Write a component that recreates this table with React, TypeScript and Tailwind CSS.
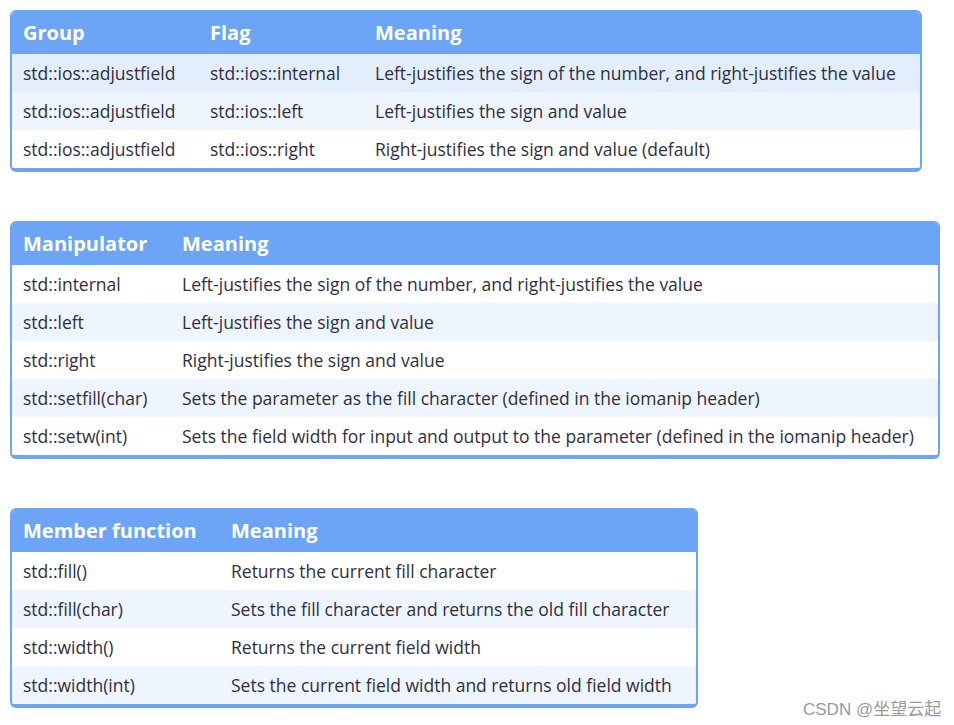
import React from 'react';

type Table = {
  width: string;
  cols: string;
  head: string[];
  rows: string[][];
  shades: string[];
};

const tables: Table[] = [
  {
    width: 'w-[912px]',
    cols: 'grid-cols-[187px_165px_1fr]',
    head: ['Group', 'Flag', 'Meaning'],
    rows: [
      ['std::ios::adjustfield', 'std::ios::internal', 'Left-justifies the sign of the number, and right-justifies the value'],
      ['std::ios::adjustfield', 'std::ios::left', 'Left-justifies the sign and value'],
      ['std::ios::adjustfield', 'std::ios::right', 'Right-justifies the sign and value (default)'],
    ],
    shades: ['bg-[#e3eefd]', 'bg-[#eef5fe]', 'bg-white'],
  },
  {
    width: 'w-[930px]',
    cols: 'grid-cols-[159px_1fr]',
    head: ['Manipulator', 'Meaning'],
    rows: [
      ['std::internal', 'Left-justifies the sign of the number, and right-justifies the value'],
      ['std::left', 'Left-justifies the sign and value'],
      ['std::right', 'Right-justifies the sign and value'],
      ['std::setfill(char)', 'Sets the parameter as the fill character (defined in the iomanip header)'],
      ['std::setw(int)', 'Sets the field width for input and output to the parameter (defined in the iomanip header)'],
    ],
    shades: ['bg-white', 'bg-[#eef5fe]', 'bg-white', 'bg-[#eef5fe]', 'bg-white'],
  },
  {
    width: 'w-[688px]',
    cols: 'grid-cols-[208px_1fr]',
    head: ['Member function', 'Meaning'],
    rows: [
      ['std::fill()', 'Returns the current fill character'],
      ['std::fill(char)', 'Sets the fill character and returns the old fill character'],
      ['std::width()', 'Returns the current field width'],
      ['std::width(int)', 'Sets the current field width and returns old field width'],
    ],
    shades: ['bg-white', 'bg-[#eef5fe]', 'bg-white', 'bg-[#eef5fe]'],
  },
];

function DataTable({ t }: { t: Table }) {
  return (
    <div className={`${t.width} rounded-[6px] border-x-2 border-t-2 border-b-4 border-[#6da5f6] overflow-hidden`}>
      <div className={`grid ${t.cols} h-[42px] bg-[#6da5f6] items-center`}>
        {t.head.map((h) => (
          <div key={h} className="pl-[11px] text-[20px] font-bold text-white">
            {h}
          </div>
        ))}
      </div>
      {t.rows.map((r, i) => (
        <div key={i} className={`grid ${t.cols} h-[38px] items-center ${t.shades[i]}`}>
          {r.map((c, j) => (
            <div key={j} className="pl-[11px] text-[17.5px] text-[#2f2f3f] whitespace-nowrap">
              {c}
            </div>
          ))}
        </div>
      ))}
    </div>
  );
}

export default function App() {
  return (
    <div className="relative w-[954px] h-[725px] bg-white font-['Open_Sans',sans-serif]">
      <div className="flex flex-col gap-[49px] pt-[10px] pl-[10px]">
        {tables.map((t, i) => (
          <DataTable key={i} t={t} />
        ))}
      </div>
      <div className="absolute left-[803px] top-[697px] text-[17px] text-[#9a9a9a] font-['Liberation_Sans','Noto_Sans_CJK_SC',sans-serif]">
        CSDN @坐望云起
      </div>
    </div>
  );
}
